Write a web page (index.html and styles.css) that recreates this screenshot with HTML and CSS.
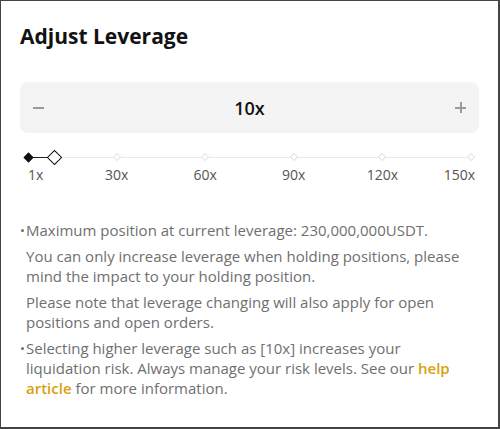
FILE: index.html
```html
<!DOCTYPE html>
<html>
<head>
<meta charset="utf-8">
<link rel="stylesheet" href="styles.css">
</head>
<body>
<div class="panel">
  <h1 class="title">Adjust Leverage</h1>
  <div class="stepper">
    <span class="step minus"></span>
    <span class="value">10x</span>
    <span class="step plus"></span>
  </div>
  <div class="slider">
    <div class="track"><div class="fill" style="width:6.04%"></div><span class="handle" style="left:6.04%"></span></div>
    <div class="marks">
      <div class="mark first"><span class="tick active"></span><span class="lbl">1x</span></div>
      <div class="mark"><span class="tick"></span><span class="lbl">30x</span></div>
      <div class="mark"><span class="tick"></span><span class="lbl">60x</span></div>
      <div class="mark"><span class="tick"></span><span class="lbl">90x</span></div>
      <div class="mark"><span class="tick"></span><span class="lbl">120x</span></div>
      <div class="mark last"><span class="tick"></span><span class="lbl">150x</span></div>
    </div>
  </div>
  <ul class="notes">
    <li>
      <p>Maximum position at current leverage: 230,000,000USDT.</p>
      <p>You can only increase leverage when holding positions, please mind the impact to your holding position.</p>
      <p>Please note that leverage changing will also apply for open positions and open orders.</p>
    </li>
    <li>
      <p>Selecting higher leverage such as [10x] increases your liquidation risk. Always manage your risk levels. See our <a class="link" href="#">help article</a> for more information.</p>
    </li>
  </ul>
</div>
</body>
</html>
```
FILE: styles.css
```css
* { box-sizing: border-box; }
html, body { margin: 0; padding: 0; background: #fff; }
body { font-family: "Open Sans", "Noto Sans", sans-serif; }
.panel {
  width: 500px;
  height: 429px;
  border-style: solid;
  border-color: #444;
  border-width: 1px 2px 2px 1px;
  padding: 19px 19px 0 19px;
}
.title {
  margin: 0;
  font-size: 21px;
  line-height: 32px;
  font-weight: 700;
  color: #121212;
}
.stepper {
  margin-top: 30px;
  height: 51px;
  background: #f4f4f4;
  border-radius: 8px;
  display: flex;
  align-items: center;
  justify-content: space-between;
  padding: 0 13px 0 13px;
}
.value { font-size: 18px; font-weight: 600; color: #111; }
.step { width: 11px; height: 11px; position: relative; display: block; }
.step::before, .plus::after {
  content: ""; position: absolute; background: #9a9a9a;
}
.step::before { left: 0; right: 0; top: 5px; height: 1.5px; }
.plus::after { top: 0; bottom: 0; left: 5px; width: 1.5px; }
.slider {
  position: relative;
  margin-top: 20px;
  padding: 0 4px 0 4px;
}
.track {
  position: absolute;
  left: 8px; right: 8px;
  top: 4px;
  height: 1px;
  background: #e9e9ee;
}
.fill { height: 1px; background: #222; }
.handle {
  position: absolute;
  top: -5px;
  width: 11px; height: 11px;
  margin-left: -5.5px;
  background: #fff;
  border: 1.6px solid #111;
  transform: rotate(45deg);
}
.marks { display: flex; justify-content: space-between; position: relative; }
.mark { width: 8px; display: flex; flex-direction: column; align-items: center; }
.mark.first { align-items: flex-start; }
.mark.last { align-items: flex-end; }
.tick {
  width: 6px; height: 6px; margin: 1px;
  background: #fff;
  border: 1px solid #e3e3e8;
  transform: rotate(45deg);
  position: relative;
}
.tick.active { background: #111; border-color: #111; width: 7px; height: 7px; margin: 0.5px; }
.lbl {
  white-space: nowrap;
  margin-top: 4px;
  font-size: 14px;
  line-height: 20px;
  color: #555;
}
.mark.first .lbl { margin-left: 4px; }
.notes {
  list-style: none;
  margin: 35px 0 0 0;
  padding: 0 0 0 6px;
  font-size: 15px;
  line-height: 20px;
  color: #6f6f6f;
}
.notes li { position: relative; margin-bottom: 6px; }
.notes li::before {
  content: "";
  position: absolute;
  left: -5px; top: 9px;
  width: 3px; height: 3px;
  border-radius: 50%;
  background: #6f6f6f;
}
.notes p { margin: 0 0 6px 0; }
.notes li p:last-child { margin-bottom: 0; }
.link { color: #d9a00c; text-decoration: none; font-weight: 600; }
```
